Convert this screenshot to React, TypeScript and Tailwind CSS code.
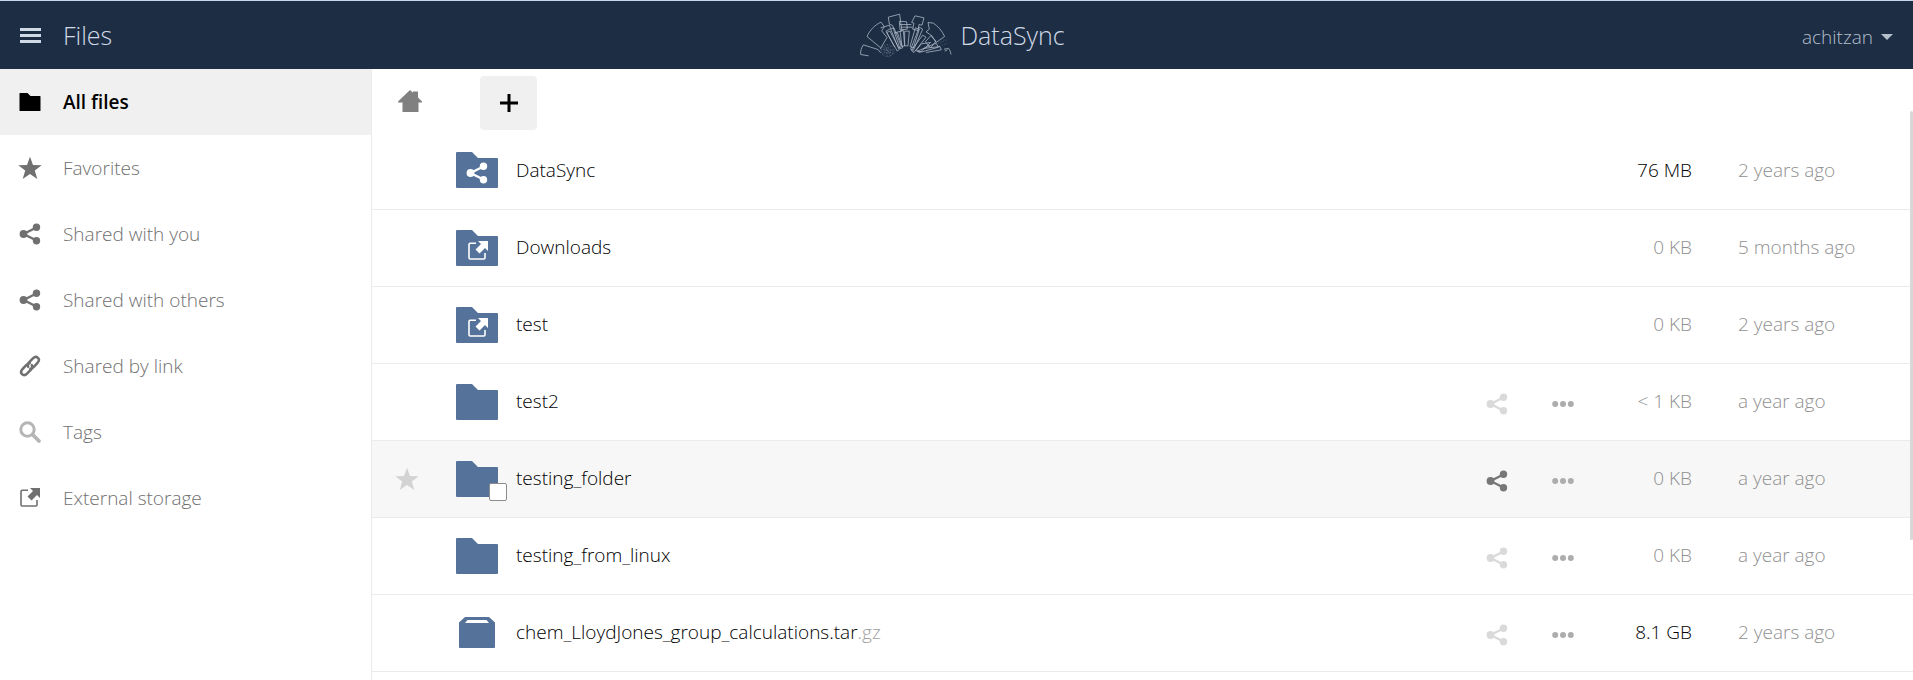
import type { ReactNode } from 'react';

type IconProps = { className?: string };

type NavItem = {
  label: string;
  icon: (props: IconProps) => ReactNode;
  tone: string;
  active?: boolean;
};

type FileRow = {
  name: string;
  extension?: string;
  kind: 'folder' | 'shared' | 'external' | 'archive';
  size: string;
  modified: string;
  actions?: boolean;
  hovered?: boolean;
  large?: boolean;
};

function FolderIcon({ className }: IconProps) {
  return (
    <svg viewBox="0 0 42 36" className={className} fill="currentColor" aria-hidden="true">
      <path d="M1 0h15l6 6h19a1 1 0 0 1 1 1v28a1 1 0 0 1-1 1H1a1 1 0 0 1-1-1V1a1 1 0 0 1 1-1z" />
    </svg>
  );
}

function StarIcon({ className }: IconProps) {
  return (
    <svg viewBox="0 0 24 24" className={className} fill="currentColor" aria-hidden="true">
      <path d="M12 .8l3 8.1 8.7.3-6.9 5.3 2.5 8.4L12 18l-7.3 4.900 2.500-8.400L.300 9.200 9 8.900z" />
    </svg>
  );
}

function ShareIcon({ className }: IconProps) {
  return (
    <svg viewBox="0 0 22 22" className={className} fill="currentColor" aria-hidden="true">
      <path d="M17.500 4.500L4.500 11l13 6.500" fill="none" stroke="currentColor" strokeWidth="2.400" />
      <circle cx="4.500" cy="11" r="3.900" />
      <circle cx="17.500" cy="4.200" r="3.700" />
      <circle cx="17.500" cy="17.800" r="3.700" />
    </svg>
  );
}

function LinkIcon({ className }: IconProps) {
  return (
    <svg
      viewBox="0 0 24 24"
      className={className}
      fill="none"
      stroke="currentColor"
      strokeWidth="2.800"
      strokeLinecap="round"
      aria-hidden="true"
    >
      <path d="M12.400 15.200c1.900-.4 2.600-1.100 4-2.600l3.800-4.100c1.700-1.900 2-4 .5-5.400s-3.800-1.100-5.500.6l-4 4.100c-1.700 1.800-2 3.400-1.200 5.100" />
      <path d="M11.600 8.800c-1.900.4-2.600 1.100-4 2.600l-3.800 4.100c-1.700 1.900-2 4-.5 5.400s3.800 1.100 5.500-.6l4-4.100c1.700-1.800 2-3.400 1.200-5.100" />
    </svg>
  );
}

function SearchIcon({ className }: IconProps) {
  return (
    <svg viewBox="0 0 24 24" className={className} fill="none" stroke="currentColor" aria-hidden="true">
      <circle cx="9.500" cy="9.500" r="6.700" strokeWidth="3" />
      <path d="M14.500 14.500l6.500 6.500" strokeWidth="3.800" strokeLinecap="round" />
    </svg>
  );
}

function ExternalIcon({ className }: IconProps) {
  return (
    <svg viewBox="0 0 22 22" className={className} aria-hidden="true">
      <path
        d="M9 3.200H3.200a1.200 1.200 0 0 0-1.200 1.200v13.400a1.200 1.200 0 0 0 1.200 1.200h13.600a1.200 1.200 0 0 0 1.200-1.200V13"
        fill="none"
        stroke="currentColor"
        strokeWidth="1.600"
      />
      <path d="M11 1h10v10l-3-3-5.500 5.500-4-4L14 4z" fill="currentColor" />
    </svg>
  );
}

function HomeIcon({ className }: IconProps) {
  return (
    <svg viewBox="0 0 24 22" className={className} fill="currentColor" aria-hidden="true">
      <path d="M12 0l3 2.700V1.500h5v5.900l4 4.100v1h-3.500V22h-16v-9.500H0v-1z" />
    </svg>
  );
}

function ArchiveIcon({ className }: IconProps) {
  return (
    <svg viewBox="0 0 36 31" className={className} fill="currentColor" aria-hidden="true">
      <path
        fillRule="evenodd"
        d="M6 0h24l6 5.500V30a1 1 0 0 1-1 1H1a1 1 0 0 1-1-1V5.500zM8.500 3L6 6h24l-2.500-3z"
      />
    </svg>
  );
}

function DotsIcon({ className }: IconProps) {
  return (
    <svg viewBox="0 0 22 6" className={className} fill="currentColor" aria-hidden="true">
      <circle cx="3.200" cy="3" r="3" />
      <circle cx="11" cy="3" r="3" />
      <circle cx="18.800" cy="3" r="3" />
    </svg>
  );
}

function Logo({ className }: IconProps) {
  return (
    <svg
      viewBox="0 0 276 134"
      className={className}
      fill="none"
      stroke="currentColor"
      strokeWidth="2.400"
      strokeLinejoin="round"
      aria-hidden="true"
    >
      <path d="M26 128L2 124c-1-10 2-20 8-29l44 14 8 10" />
      <path d="M62 104L21 70c8-18 22-34 42-43l10 14-8 12 16 20-20 34" />
      <path d="M62 44l26-8 4 10-14 8 26 48" />
      <path d="M85 12l34-9 3 24 4 26-22 6-6-22-10-4z" />
      <path d="M92 48l10-4 22 56-8 6z" />
      <path d="M80 58l10-4 28 54-6 6z" />
      <path d="M104 60l8-2 16 46-8 2z" />
      <path d="M118 24l22 2 2 22-22 2zM120 34h34M124 42h34" />
      <path d="M120 54l10-2 4 46-8 2z" />
      <path d="M134 54l14 0-4 44-10 0z" />
      <path d="M165 8l27 6-6 22-9-2-3 18-16-4 4-18-7-2z" />
      <path d="M166 44l12 4-18 56-10-4z" />
      <path d="M178 42l10 6-28 64-8-4z" />
      <path d="M188 66l10 6-36 46-8-6z" />
      <path d="M204 28l16 2c14 9 26 23 34 40l-26 18-12-20-18-12 10-8z" />
      <path d="M196 86l16-18 16 16-16 20z" />
      <path d="M184 92l28-4-32 30-12-6z" />
      <path d="M172 114l56-24 8 12-50 14z" />
      <path d="M190 106l50-6 4 10-46 8" />
      <path d="M252 108l14-2c4 5 6 11 7 18M254 114l8-4" />
      <g strokeWidth="1.800" strokeDasharray="4 4" opacity="0.500">
        <path d="M64 98l34 24M62 110h42M66 124l30-28M82 94v36M74 98l18 30M60 104l42 18M70 120l22-4" />
        <circle cx="82" cy="112" r="18" />
        <circle cx="82" cy="112" r="10" />
        <path d="M226 94l34-14M230 102l32-12M104 118l-20 14" />
      </g>
    </svg>
  );
}

const navItems: NavItem[] = [
  { label: 'All files', icon: FolderIcon, tone: 'h-[18px] w-[22px] text-black', active: true },
  { label: 'Favorites', icon: StarIcon, tone: 'size-6 text-[#707070]' },
  { label: 'Shared with you', icon: ShareIcon, tone: 'size-[22px] text-[#707070]' },
  { label: 'Shared with others', icon: ShareIcon, tone: 'size-[22px] text-[#707070]' },
  { label: 'Shared by link', icon: LinkIcon, tone: 'size-[22px] text-[#707070]' },
  { label: 'Tags', icon: SearchIcon, tone: 'size-6 text-[#b5b5b5]' },
  { label: 'External storage', icon: ExternalIcon, tone: 'size-[22px] text-[#707070]' },
];

const files: FileRow[] = [
  { name: 'DataSync', kind: 'shared', size: '76 MB', modified: '2 years ago', large: true },
  { name: 'Downloads', kind: 'external', size: '0 KB', modified: '5 months ago' },
  { name: 'test', kind: 'external', size: '0 KB', modified: '2 years ago' },
  { name: 'test2', kind: 'folder', size: '< 1 KB', modified: 'a year ago', actions: true },
  { name: 'testing_folder', kind: 'folder', size: '0 KB', modified: 'a year ago', actions: true, hovered: true },
  { name: 'testing_from_linux', kind: 'folder', size: '0 KB', modified: 'a year ago', actions: true },
  {
    name: 'chem_LloydJones_group_calculations.tar',
    extension: '.gz',
    kind: 'archive',
    size: '8.1 GB',
    modified: '2 years ago',
    actions: true,
    large: true,
  },
];

function FileThumbnail({ file }: { file: FileRow }) {
  return (
    <div className="relative flex h-9 w-[42px] items-center justify-center text-[#54729a]">
      {file.kind === 'archive' ? (
        <ArchiveIcon className="h-[31px] w-9" />
      ) : (
        <FolderIcon className="h-9 w-[42px]" />
      )}
      {file.kind === 'shared' && (
        <ShareIcon className="absolute top-2.5 left-2.5 size-[22px] text-white" />
      )}
      {file.kind === 'external' && (
        <ExternalIcon className="absolute top-2.5 left-[11px] size-[22px] text-white" />
      )}
      {file.hovered && (
        <input
          type="checkbox"
          aria-label={`Select ${file.name}`}
          className="absolute -right-[9px] -bottom-1 size-[18px] appearance-none rounded-xs border border-[#8c8c8c] bg-white"
        />
      )}
    </div>
  );
}

function FileTableRow({ file }: { file: FileRow }) {
  return (
    <tr className={`h-[77px] border-b border-[#ebebeb] ${file.hovered ? 'bg-[#f7f7f7]' : ''}`}>
      <td className="w-[84px] pl-[23px]">
        {file.hovered && (
          <button type="button" aria-label="Favorite" className="block text-[#d3d3d3]">
            <StarIcon className="size-6" />
          </button>
        )}
      </td>
      <td className="w-15">
        <FileThumbnail file={file} />
      </td>
      <td>
        <a href="#" className="text-black">
          {file.name}
          {file.extension && <span className="text-[#a0a0a0]">{file.extension}</span>}
        </a>
      </td>
      <td className="w-[110px]">
        {file.actions && (
          <div className="flex items-center gap-11 pt-1">
            <button
              type="button"
              aria-label="Share"
              className={file.hovered ? 'text-[#777777]' : 'text-[#dadada]'}
            >
              <ShareIcon className="size-[22px]" />
            </button>
            <button type="button" aria-label="More actions" className="text-[#adadad]">
              <DotsIcon className="h-1.5 w-[22px]" />
            </button>
          </div>
        )}
      </td>
      <td className={`w-24 text-right ${file.large ? 'text-black' : 'text-[#909090]'}`}>{file.size}</td>
      <td className="w-[221px] pl-[46px] text-[#909090]">{file.modified}</td>
    </tr>
  );
}

export default function App() {
  return (
    <div
      className="flex h-screen flex-col overflow-hidden bg-white text-[19px] font-light"
      style={{ fontFamily: '"Open Sans", sans-serif' }}
    >
      <header className="grid h-[69px] shrink-0 grid-cols-[1fr_auto_1fr] items-center border-t border-[#c9d6ea] bg-[#1d2d44] text-[#d0d9e6]">
        <div className="flex items-center gap-[22px] pl-5">
          <button type="button" aria-label="Menu" className="flex w-[21px] flex-col gap-[3px]">
            <span className="h-[3px] bg-current" />
            <span className="h-[3px] bg-current" />
            <span className="h-[3px] bg-current" />
          </button>
          <h1 className="text-[25px] leading-8">Files</h1>
        </div>
        <a href="#" className="flex items-center gap-2 pl-3">
          <Logo className="h-[45px] w-[92px] opacity-80" />
          <span className="text-[25px] leading-8">DataSync</span>
        </a>
        <button type="button" className="flex items-center gap-2 justify-self-end pt-1 pr-5 text-[#b4bfcc]">
          achitzan
          <svg viewBox="0 0 12 6" className="h-1.5 w-3" fill="currentColor" aria-hidden="true">
            <path d="M0 0h12L6 6z" />
          </svg>
        </button>
      </header>

      <div className="flex min-h-0 flex-1">
        <nav className="w-[372px] shrink-0 border-r border-[#ebebeb]">
          {navItems.map((item) => {
            const Icon = item.icon;

            return (
              <a
                key={item.label}
                href="#"
                className={`flex h-[66px] items-center gap-[21px] pl-[18px] ${
                  item.active ? 'bg-[#f0f0f0] font-semibold text-black' : 'text-[#707070]'
                }`}
              >
                <span className="flex w-6 justify-center">
                  <Icon className={item.tone} />
                </span>
                {item.label}
              </a>
            );
          })}
        </nav>

        <main className="relative min-w-0 flex-1">
          <div className="flex h-[63px] items-start gap-[58px] pt-[7px] pl-[26px]">
            <a href="#" aria-label="Home" className="mt-3.5 text-[#808080]">
              <HomeIcon className="h-[22px] w-6" />
            </a>
            <button
              type="button"
              aria-label="New"
              className="flex h-[54px] w-[57px] items-center justify-center rounded-[4px] bg-[#f0f0f0] text-black"
            >
              <svg viewBox="0 0 18 18" className="size-[18px]" fill="currentColor" aria-hidden="true">
                <path d="M7.500 0h3v7.500H18v3h-7.500V18h-3v-7.500H0v-3h7.500z" />
              </svg>
            </button>
          </div>
          <table className="w-full table-fixed border-collapse">
            <tbody>
              {files.map((file) => (
                <FileTableRow key={file.name} file={file} />
              ))}
            </tbody>
          </table>
          <div className="absolute top-[42px] right-0 h-[429px] w-[3px] rounded-xs bg-[#d8d8d8]" />
        </main>
      </div>
    </div>
  );
}
